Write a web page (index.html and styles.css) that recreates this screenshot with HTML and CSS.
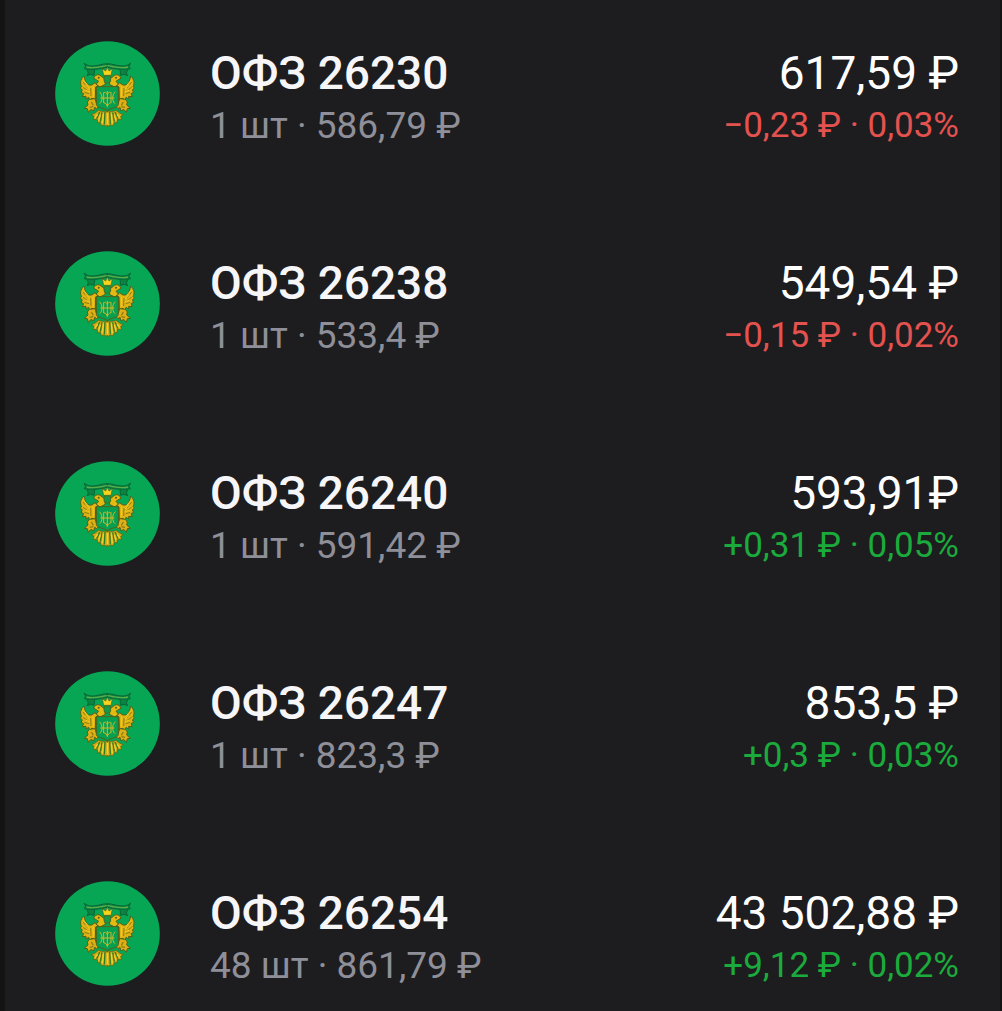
FILE: index.html
```html
<!DOCTYPE html>

<html lang="ru">

<head>
    <meta charset="UTF-8">
    <meta name="viewport" content="width=device-width, initial-scale=1">
    <title>ОФЗ</title>
    <link rel="stylesheet" href="styles.css">
</head>

<body>
    <svg class="sprite" aria-hidden="true">
        <defs>
            <!-- One side of the eagle, mirrored around x = 172 -->
            <g id="wing">
                <!-- ribbon -->
                <path d="M172 85 C155 85 138 94 122 92 C114 91 108 88 102 83 L107 93 L103 100 C118 106 150 101 172 96 Z" fill="#0b8442" stroke="#086636" stroke-width="3"/>
                <path d="M110 95 C130 101 150 94 172 91" fill="none" stroke="#5cae48" stroke-width="4"/>
                <path d="M111 103 L115 113 L111 121 L122 117 L132 120 L134 103" fill="#0b8442" stroke="#086636" stroke-width="3"/>
                <!-- head and neck -->
                <path d="M131 129 C134 118 146 115 153 122 L162 129 L166 147 L150 155 L138 147 L146 138 L139 133 Z" fill="#e3b912" stroke="#55601a" stroke-width="3"/>
                <circle cx="146" cy="127" r="3" fill="#55601a"/>
                <!-- wing feathers -->
                <path d="M102 122 C90 133 90 146 95 153 L91 158 L97 164 L93 171 L101 175 L97 184 L108 183 L108 191 L116 186 L119 195 L125 189 L136 192 L137 155 L144 152 L135 142 L125 149 L114 149 C107 142 104 133 102 122 Z" fill="#dfb313" stroke="#55601a" stroke-width="3"/>
                <path d="M99 140 L113 158 M99 156 L115 167 M103 171 L117 175 M122 158 L123 182" fill="none" stroke="#8d7d14" stroke-width="3"/>
                <path d="M101 135 L117 154 M106 149 L119 161 M107 164 L120 170 M129 153 L130 184" fill="none" stroke="#f2cd25" stroke-width="3"/>
                <!-- leg and claw -->
                <path d="M118 192 L135 190 L139 203 L147 212 L140 220 L134 216 L131 227 L123 222 L115 231 L112 220 L103 219 L114 209 L112 200 Z" fill="#dcb016" stroke="#55601a" stroke-width="3"/>
                <path d="M124 200 L130 210 M119 216 L130 214" fill="none" stroke="#8d7d14" stroke-width="4"/>
                <!-- tail -->
                <path d="M172 228 L154 228 L146 225 L134 234 L124 238 L132 243 L129 252 L143 253 L142 263 L151 261 L154 271 L163 269 L172 274 Z" fill="#d6ac15" stroke="#55601a" stroke-width="2"/>
                <path d="M165 230 L163 267 M156 231 L151 259 M149 230 L140 250" fill="none" stroke="#2f7d24" stroke-width="4"/>
                <path d="M160 235 L157 264 M151 238 L146 256 M143 237 L135 247" fill="none" stroke="#f4d02a" stroke-width="4"/>
            </g>
            <symbol id="emblem" viewBox="15 17 315 315">
                <circle cx="172.500" cy="174.500" r="157" fill="#06a654"/>
                <use href="#wing"/>
                <use href="#wing" transform="translate(344 0) scale(-1 1)"/>
                <path d="M172 232 L172 268" fill="none" stroke="#f4d02a" stroke-width="5"/>
                <!-- crown -->
                <path d="M161 120 L157 100 L167 107 L172 96 L177 107 L187 100 L183 120 Z" fill="#f7d51c" stroke="#55601a" stroke-width="2"/>
                <path d="M163 122 L181 122 L182 138 L172 145 L162 138 Z" fill="#129a4b" stroke="#55601a" stroke-width="2"/>
                <!-- shield with the monogram -->
                <path d="M139 154 L205 154 L205 207 C204 219 185 216 172 226 C159 216 140 219 139 207 Z" fill="#06a050" stroke="#55601a" stroke-width="3"/>
                <path d="M148 169 C158 178 159 196 149 205 M196 169 C186 178 185 196 195 205 M151 188 L193 188 M161 171 L161 203 M183 171 L183 203 M172 167 L172 214 M161 202 C167 204 171 207 172 213 C173 207 177 204 183 202 M161 173 C166 168 170 172 172 178 C174 172 178 168 183 173" fill="none" stroke="#cdb92a" stroke-width="3"/>
            </symbol>
        </defs>
    </svg>

    <ul class="bonds">
        <li class="bond">
            <svg class="logo" aria-hidden="true"><use href="#emblem"/></svg>
            <div class="info">
                <div class="name">ОФЗ 26230</div>
                <div class="count">1 шт · 586,79 ₽</div>
            </div>
            <div class="total">
                <div class="amount">617,59 ₽</div>
                <div class="change down">−0,23 ₽ · 0,03%</div>
            </div>
        </li>
        <li class="bond">
            <svg class="logo" aria-hidden="true"><use href="#emblem"/></svg>
            <div class="info">
                <div class="name">ОФЗ 26238</div>
                <div class="count">1 шт · 533,4 ₽</div>
            </div>
            <div class="total">
                <div class="amount">549,54 ₽</div>
                <div class="change down">−0,15 ₽ · 0,02%</div>
            </div>
        </li>
        <li class="bond">
            <svg class="logo" aria-hidden="true"><use href="#emblem"/></svg>
            <div class="info">
                <div class="name">ОФЗ 26240</div>
                <div class="count">1 шт · 591,42 ₽</div>
            </div>
            <div class="total">
                <div class="amount">593,91₽</div>
                <div class="change up">+0,31 ₽ · 0,05%</div>
            </div>
        </li>
        <li class="bond">
            <svg class="logo" aria-hidden="true"><use href="#emblem"/></svg>
            <div class="info">
                <div class="name">ОФЗ 26247</div>
                <div class="count">1 шт · 823,3 ₽</div>
            </div>
            <div class="total">
                <div class="amount">853,5 ₽</div>
                <div class="change up">+0,3 ₽ · 0,03%</div>
            </div>
        </li>
        <li class="bond">
            <svg class="logo" aria-hidden="true"><use href="#emblem"/></svg>
            <div class="info">
                <div class="name">ОФЗ 26254</div>
                <div class="count">48 шт · 861,79 ₽</div>
            </div>
            <div class="total">
                <div class="amount">43 502,88 ₽</div>
                <div class="change up">+9,12 ₽ · 0,02%</div>
            </div>
        </li>
    </ul>
</body>

</html>
```

FILE: styles.css
```css
* {
    box-sizing: border-box;
}

body {
    background-color: #1d1d1f;
    color: #f6f6f8;
    font-family: Roboto, "Noto Sans", sans-serif;
    margin: 0;
    min-height: 100vh;
    border-left: 5px solid #131314; /* Dark edge of the panel */
    border-right: 2px solid #131314;
}

.sprite {
    display: block;
    width: 0;
    height: 0;
}

.bonds {
    list-style: none;
    margin: 0;
    padding: 41px 41px 25px 50px;
    display: flex;
    flex-direction: column;
    gap: 105px; /* Space between rows */
}

.bond {
    display: flex;
    align-items: center;
    gap: 50px;
}

.logo {
    width: 105px;
    height: 105px;
    flex-shrink: 0;
}

.info {
    flex: 1;
}

.info, .total {
    padding-top: 6px;
    height: 105px;
    white-space: nowrap;
}

.name, .amount {
    font-size: 46px;
    line-height: 52px;
}

.name {
    font-weight: 500;
}

.count, .change {
    line-height: 54px;
}

.count {
    color: #8f8f99;
    font-size: 37px;
}

.total {
    text-align: right;
}

.amount {
    color: #ffffff;
}

.change {
    font-size: 35px;
}

.up {
    color: #1aab3c; /* Green for growth */
}

.down {
    color: #e4524f; /* Red for loss */
}
```
